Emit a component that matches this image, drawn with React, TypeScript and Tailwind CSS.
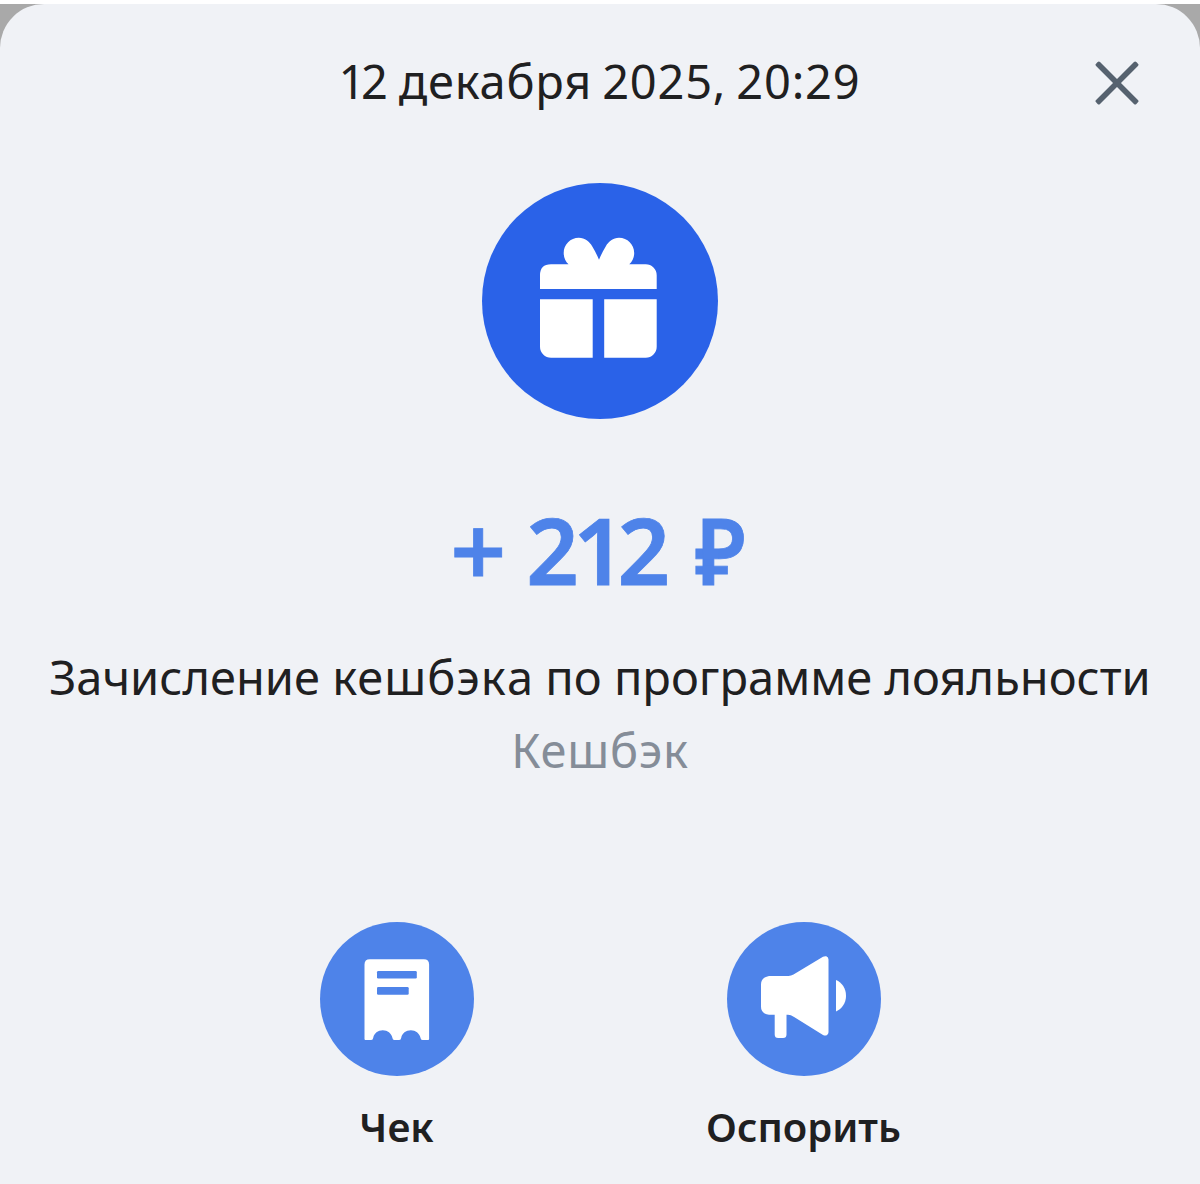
import React from "react";

const GiftIcon = () => (
  <svg viewBox="0 0 236 236" className="size-full" fill="#fff">
    <path d="M58 106V92.300Q58 81.300 69 81.300H86.500C83.500 78.500 81.700 74.500 81.700 70C81.700 61.500 88.500 54.800 96.800 54.800C103 54.800 107.300 58.300 110.300 63.500C113 68 115.500 73 117 76.700C118.500 73 121 68 123.700 63.500C126.700 58.300 131 54.800 137 54.800C145.400 54.800 152.200 61.500 152.200 70C152.200 74.500 150.300 78.500 147.300 81.300H163.700A11 11 0 0 1 174.700 92.300V106Z" />
    <path d="M58 116.200H110.700V174.700H69A11 11 0 0 1 58 163.700Z" />
    <path d="M122.200 116.200H174.700V163.700A11 11 0 0 1 163.700 174.700H122.200Z" />
  </svg>
);

const ReceiptIcon = () => (
  <svg viewBox="0 0 154 154" className="size-full">
    <path
      fill="#fff"
      d="M44.500 42.500Q44.500 37.200 49.800 37.200H103.800Q109.100 37.200 109.100 42.500V117Q109.100 118 108.100 118H102.500Q100.700 118 100.400 115.500C99.500 111.500 95.500 108.300 90.900 108.300C86 108.300 82 111.500 81.300 115.500Q81 118 79.200 118H74.400Q72.600 118 72.300 115.500C71.500 111.500 67.500 108.300 62.800 108.300C58 108.300 54 111.500 53.300 115.500Q53 118 51.200 118H45.500Q44.500 118 44.500 117Z"
    />
    <rect x="57" y="49" width="39.800" height="7.500" rx="1.300" fill="#4e83e9" />
    <rect x="57" y="65" width="31.700" height="7.700" rx="1.300" fill="#4e83e9" />
  </svg>
);

const MegaphoneIcon = () => (
  <svg viewBox="0 0 154 154" className="size-full" fill="#fff">
    <path d="M42 54H61.500Q64 54 66.500 52.600L96 34.800Q97.600 33.900 99.300 34.300Q101.500 35 101.500 37.500V110.300Q101.500 112.800 99.300 113.400Q97.600 113.800 96 112.900L67.500 95.200Q63.500 92.800 61 92.800H59.500V112.500Q59.500 116 56 116H51.200Q47.700 116 47.700 112.500V92.800H42Q34 91.500 34 84.500V62.500Q34 55.500 42 54Z" />
    <path d="M109 58C115 60.500 119 66.500 119 73.700C119 80.900 115 86.900 109 89.400Z" />
  </svg>
);

const CloseIcon = () => (
  <svg viewBox="0 0 44 44" className="size-11" fill="#56626f">
    <rect x="-6.500" y="19.200" width="57" height="5.600" rx="1.700" transform="rotate(45 22 22)" />
    <rect x="-6.500" y="19.200" width="57" height="5.600" rx="1.700" transform="rotate(-45 22 22)" />
  </svg>
);

const actions = [
  { label: "Чек", icon: <ReceiptIcon /> },
  { label: "Оспорить", icon: <MegaphoneIcon /> },
];

const App = () => {
  return (
    <div className="h-[1184px] w-[1200px] overflow-hidden bg-white pt-1 font-['Noto_Sans',sans-serif] text-[#1f2021]">
      <div className="h-full bg-[#a9a9a9]">
        <main className="flex h-full flex-col items-center rounded-t-[44px] bg-[#f0f2f6]">
          <header className="grid h-[158px] w-full shrink-0 grid-cols-[104px_1fr_104px]">
            <h1 className="col-start-2 mt-[45px] -ml-px text-center text-[47px] leading-[64px] tracking-[0.8px] whitespace-nowrap [word-spacing:-3px]">
              <span className="tracking-[-4.5px]">1</span>2 декабря 2025, 20:29
            </h1>
            <button aria-label="Закрыть" className="mt-[57px] -ml-px size-11">
              <CloseIcon />
            </button>
          </header>

          <div className="mt-[21px] size-[236px] shrink-0 rounded-full bg-[#2a62e8]">
            <GiftIcon />
          </div>

          <p className="mt-[65px] flex h-[126px] items-baseline text-[92px] leading-[126px] font-semibold whitespace-nowrap text-[#4e83e9] [-webkit-text-stroke:0.8px_#4e83e9]">
            <span className="mr-5 translate-y-0.5 text-[98px]">+</span>
            <span>
              <span className="tracking-[-6px]">2</span>
              <span className="tracking-[-8px]">1</span>2
            </span>
            <span className="ml-[25px] origin-left scale-x-93">₽</span>
          </p>
          <p className="mt-[35px] text-[47px] leading-[64px] whitespace-nowrap">
            Зачисление <span className="tracking-[1.1px]">кешбэк</span>а по
            программе лояльности
          </p>
          <p className="mt-[9px] text-[47px] leading-[64px] tracking-[0.8px] text-[#858d98]">
            Кешбэк
          </p>

          <div className="mt-[140px] flex">
            {actions.map((action) => (
              <button
                key={action.label}
                className="flex w-[407px] flex-col items-center"
              >
                <span className="size-[154px] rounded-full bg-[#4e83e9]">
                  {action.icon}
                </span>
                <span className="mt-[24px] text-[40px] leading-[54px] font-semibold">
                  {action.label}
                </span>
              </button>
            ))}
          </div>
        </main>
      </div>
    </div>
  );
};

export default App;
